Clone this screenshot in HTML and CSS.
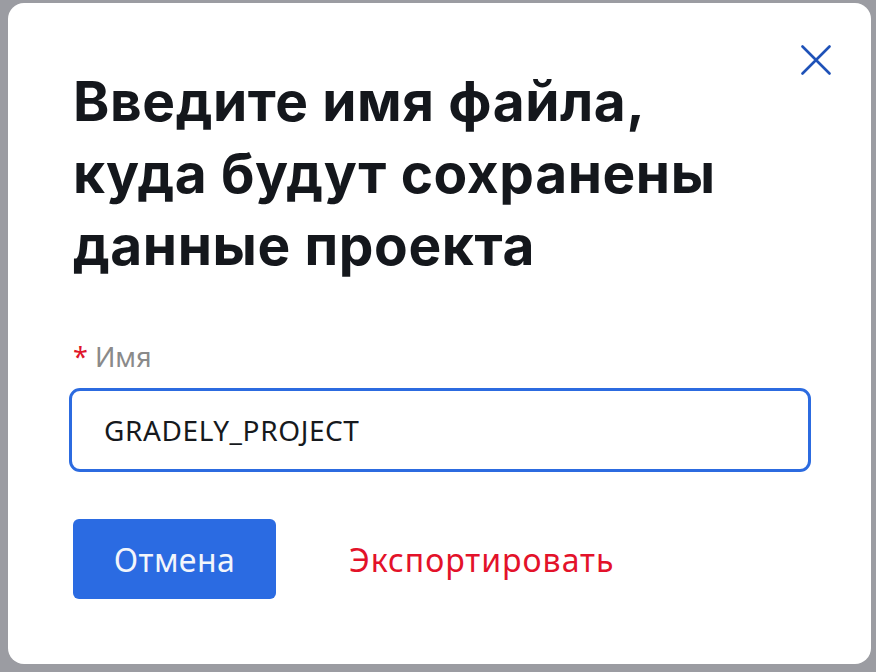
FILE: index.html
```html
<!DOCTYPE html>
<html lang="ru">
<head>
<meta charset="utf-8">
<link rel="stylesheet" href="styles.css">
</head>
<body>
<div class="backdrop">
  <div class="dialog">
    <button class="close" aria-label="Закрыть">
      <svg width="30" height="30" viewBox="0 0 30 30"><path d="M1.5 1.5 L28.5 28.5 M28.5 1.5 L1.5 28.5" stroke="#1f52b8" stroke-width="2.6" stroke-linecap="round" fill="none"/></svg>
    </button>
    <h1 class="title">Введите имя файла,<br>куда будут сохранены<br>данные проекта</h1>
    <label class="label"><span class="req">*</span> Имя</label>
    <div class="input">GRADELY_PROJECT</div>
    <div class="actions">
      <button class="btn-primary">Отмена</button>
      <button class="btn-link">Экспортировать</button>
    </div>
  </div>
</div>
</body>
</html>
```
FILE: styles.css
```css
html, body { margin: 0; padding: 0; }
body { width: 876px; height: 672px; background: #9b9ca2; overflow: hidden; }
.backdrop { padding: 3px 5px 0 8px; }
.dialog {
  position: relative;
  width: 863px; height: 661px;
  box-sizing: border-box;
  background: #fff;
  border-radius: 16px;
  padding: 62px 65px 0 65px;
}
.close {
  position: absolute; top: 42px; right: 40px;
  background: none; border: 0; padding: 0; width: 30px; height: 30px; cursor: pointer;
}
.close svg { display: block; }
.title {
  margin: 0;
  font-family: Inter, "Noto Sans", sans-serif;
  font-weight: 700;
  font-size: 55px;
  line-height: 72px;
  color: #14171c;
  letter-spacing: 0.6px;
}
.label {
  display: block;
  margin-top: 59px;
  font-family: "Noto Sans", sans-serif;
  font-size: 27px; color: #8a8a8a;
  line-height: 34px;
}
.req { color: #e0152a; }
.input {
  margin-top: 14px;
  width: 742px; height: 84px;
  box-sizing: border-box;
  border: 3px solid #2c6be0; border-radius: 11px;
  padding: 0 0 0 32px;
  display: flex; align-items: center;
  font-family: "Noto Sans", sans-serif; font-size: 28px; color: #16191d;
  letter-spacing: 0.6px;
  margin-left: -4px;
}
.actions { display: flex; align-items: center; margin-top: 47px; gap: 73px; }
.btn-primary {
  width: 203px; height: 80px;
  background: #2b6be2; color: #f2f5fb; border: 0; border-radius: 6px;
  font-family: "Noto Sans", sans-serif; font-size: 32px; letter-spacing: 0.4px;
}
.btn-link {
  background: none; border: 0; padding: 0;
  color: #e3122a;
  font-family: "Noto Sans", sans-serif; font-size: 32px; letter-spacing: 1px;
}
```
